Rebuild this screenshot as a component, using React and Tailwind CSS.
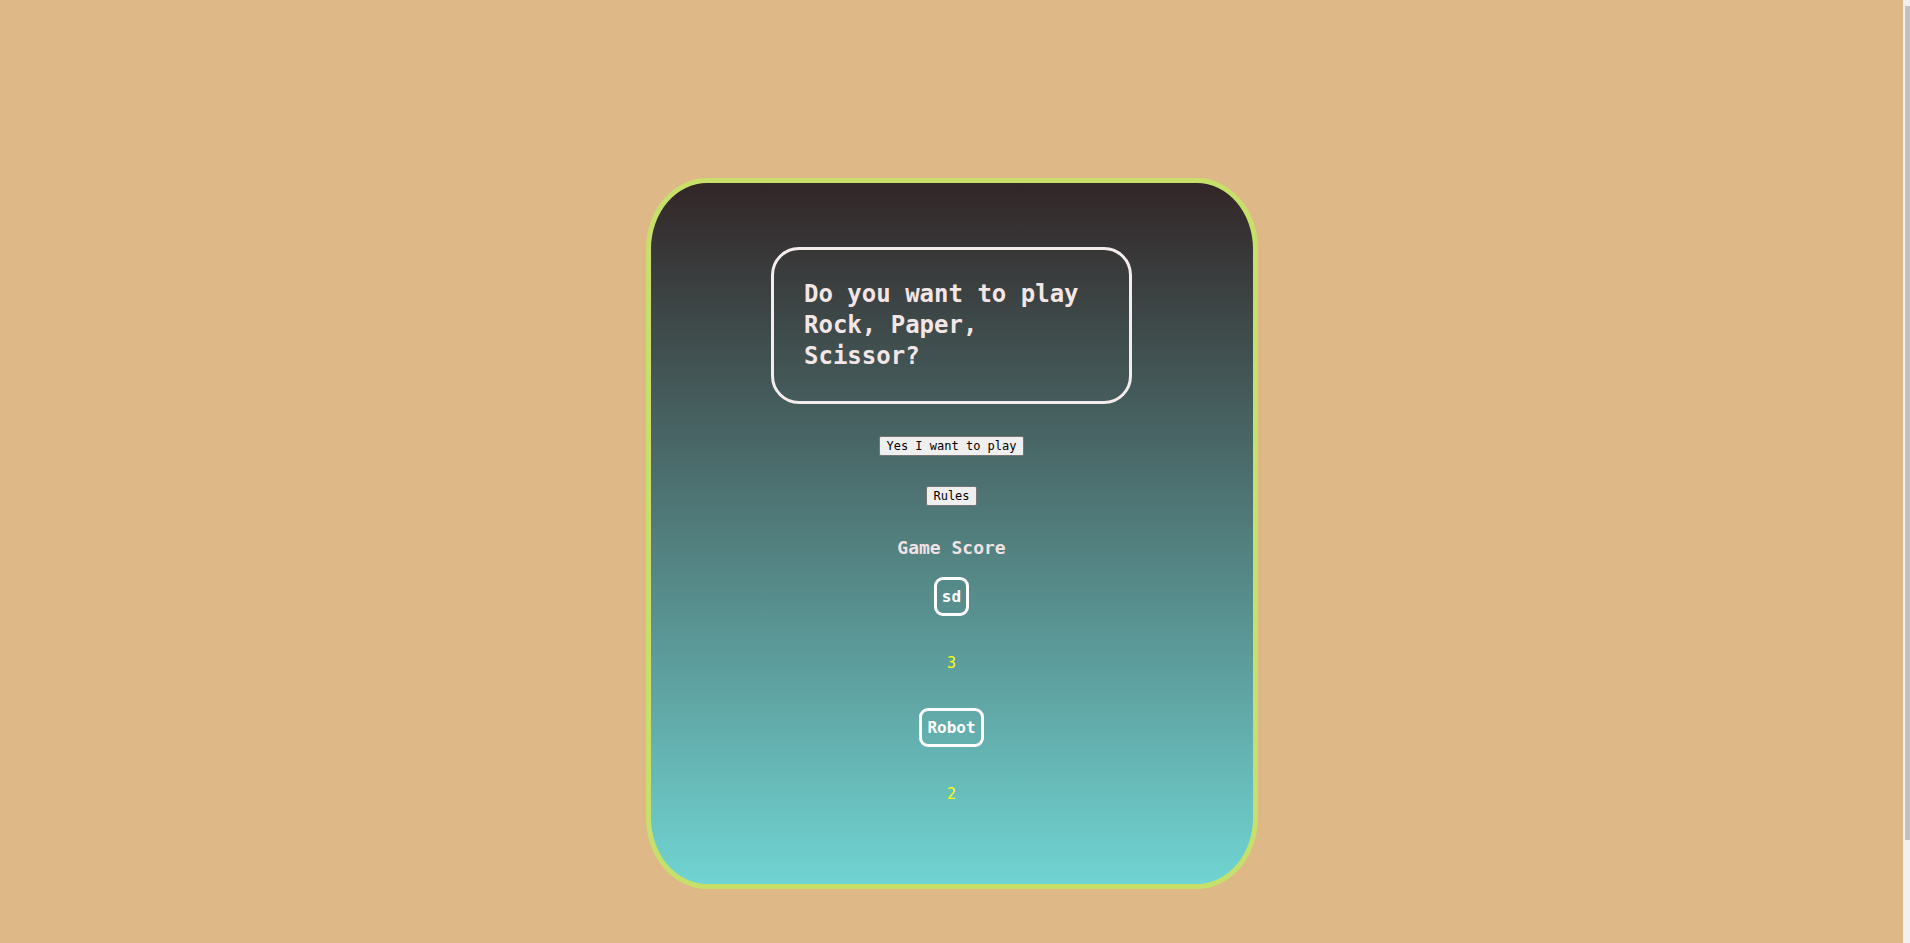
const mono = "font-['DejaVu_Sans_Mono','Liberation_Mono',monospace]";

function ScoreCard({ name, score }) {
  return (
    <>
      <div className="border-[3px] border-white rounded-[9px] px-[5px] py-[7px] text-[16px] leading-[19px] font-bold text-white">
        {name}
      </div>
      <p className="mt-[39px] text-[15px] leading-[17px] text-[#ffff00]">{score}</p>
    </>
  );
}

export default function App() {
  const players = [
    { name: "sd", score: 3 },
    { name: "Robot", score: 2 },
  ];

  return (
    <div className={`h-screen flex overflow-hidden bg-[#deb887] ${mono}`}>
      <main className="flex-1 overflow-hidden">
        <div className="flex justify-center py-[178px]">
          <div className="w-[612px] flex flex-col items-center border-[5px] border-[#c6e06a] rounded-[10%] bg-[linear-gradient(#322627,#70d4d2)] pt-[64px] pb-[81px]">
            <div className="w-[361px] border-[3px] border-[#f5ecec] rounded-[28px] px-[30px] py-[29px]">
              <h2 className="text-[24px] leading-[31px] font-bold text-[#f3e6e6]">
                Do you want to play Rock, Paper, Scissor?
              </h2>
            </div>

            <button className="mt-[32px] h-[20px] px-[6px] bg-[#efefef] border border-[#767676] rounded-[2px] text-[12px] leading-[14px] text-black">
              Yes I want to play
            </button>
            <button className="mt-[30px] h-[20px] px-[6px] bg-[#efefef] border border-[#767676] rounded-[2px] text-[12px] leading-[14px] text-black">
              Rules
            </button>

            <h3 className="mt-[31px] mb-[19px] text-[18px] leading-[21px] font-bold text-[#f0e2e2]">Game Score</h3>

            {players.map((p, i) => (
              <div key={p.name} className={`flex flex-col items-center ${i > 0 ? "mt-[36px]" : ""}`}>
                <ScoreCard name={p.name} score={p.score} />
              </div>
            ))}
          </div>
        </div>
      </main>
      {/* page scrollbar */}
      <div className="w-[7px] shrink-0 bg-[#f1f1f1] pl-[2px] pt-[6px]">
        <div className="h-[834px] bg-[#c1c1c1]" />
      </div>
    </div>
  );
}
